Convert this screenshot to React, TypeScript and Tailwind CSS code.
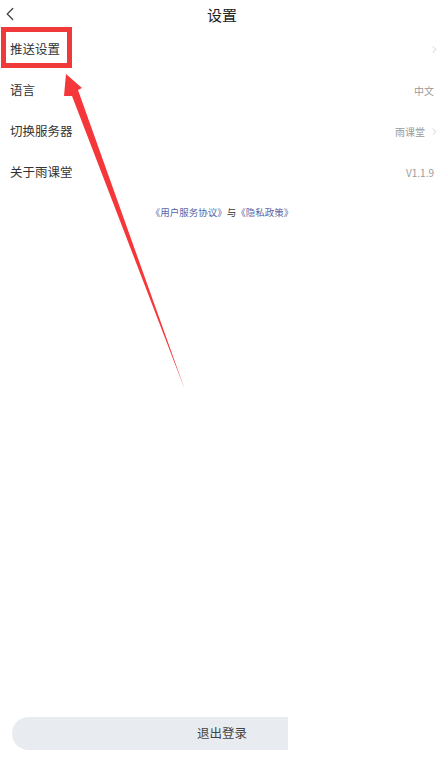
import { ChevronLeft, ChevronRight } from "lucide-react";

const rows = [
  { label: "推送设置", value: "", arrow: true },
  { label: "语言", value: "中文", arrow: false },
  { label: "切换服务器", value: "雨课堂", arrow: true },
  { label: "关于雨课堂", value: "V1.1.9", arrow: false },
];

export default function App() {
  return (
    <div
      className="relative flex flex-col h-[765px] w-[444px] bg-white overflow-hidden"
      style={{ fontFamily: '"Noto Sans CJK SC", "Noto Sans", sans-serif' }}
    >
      <div className="relative flex items-center justify-center h-[29px] shrink-0">
        <ChevronLeft
          className="absolute left-[-1px] top-[3px] w-[22px] h-[22px] text-[#444]"
          strokeWidth={1.4}
        />
        <span className="text-[15px] text-[#222] leading-none">设置</span>
      </div>

      <div className="flex flex-col">
        {rows.map((row) => (
          <div
            key={row.label}
            className="flex items-center justify-between h-[41px] pl-[10px] pr-[10px]"
          >
            <span className="text-[12.5px] text-[#333] leading-none">
              {row.label}
            </span>
            <div className="flex items-center gap-[4px]">
              {row.value && (
                <span className="text-[10px] text-[#9a9a9a] leading-none">
                  {row.value}
                </span>
              )}
              {row.arrow ? (
                <ChevronRight
                  className="w-[11px] h-[11px] text-[#bbb] -mr-[6px]"
                  strokeWidth={1.5}
                />
              ) : null}
            </div>
          </div>
        ))}
      </div>

      <div className="flex justify-center mt-[15px] text-[9.5px] leading-none">
        <span className="text-[#5a66a6]">《用户服务协议》</span>
        <span className="text-[#333]">与</span>
        <span className="text-[#5a66a6]">《隐私政策》</span>
      </div>

      <div className="mt-auto mb-[15px] ml-[12px] w-[276px] h-[33px] overflow-hidden">
        <button className="w-[420px] h-[33px] rounded-full bg-[#e8ebef] text-[12.5px] text-[#444] flex items-center justify-center">
          退出登录
        </button>
      </div>

      <div className="absolute left-[1px] top-[27px] w-[71px] h-[41px] border-[5px] border-[#f03a3a]" />

      <svg
        className="absolute left-0 top-0 pointer-events-none"
        width="444"
        height="765"
        viewBox="0 0 444 765"
      >
        <polygon
          points="66,74 82,88 78,90 185,390 72,96 64,96"
          fill="#f5373a"
        />
      </svg>
    </div>
  );
}
